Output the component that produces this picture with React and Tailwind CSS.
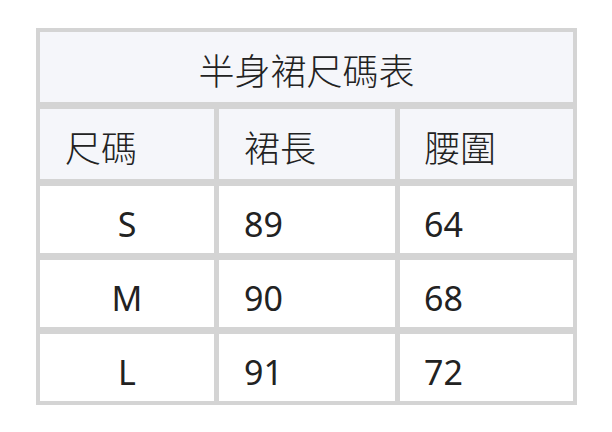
const rows = [
  { size: 'S', length: '89', waist: '64' },
  { size: 'M', length: '90', waist: '68' },
  { size: 'L', length: '91', waist: '72' },
];

export default function App() {
  return (
    <div className="w-[612px] h-[432px] bg-white pt-[28px] pl-[36px] text-[#222] font-['Noto_Sans','Noto_Sans_CJK_TC',sans-serif]">
      <div className="w-[541px] bg-[#d4d4d4] p-[4px] grid grid-cols-[174px_176px_173px] gap-x-[5px] gap-y-[7px] grid-rows-[70px_70px_67px_67px_67px]">
        <div className="col-span-3 bg-[#f5f6fa] flex items-center justify-center pt-[10px] text-[36px] font-light">半身裙尺碼表</div>

        <div className="bg-[#f5f6fa] flex items-center pl-[25px] pt-[10px] text-[36px] font-light">尺碼</div>
        <div className="bg-[#f5f6fa] flex items-center pl-[25px] pt-[10px] text-[36px] font-light">裙長</div>
        <div className="bg-[#f5f6fa] flex items-center pl-[24px] pt-[10px] text-[36px] font-light">腰圍</div>

        {rows.map(r => (
          <div key={r.size} className="contents text-[34px]">
            <div className="bg-white flex items-center justify-center pt-[9px]">{r.size}</div>
            <div className="bg-white flex items-center pl-[25px] pt-[9px]">{r.length}</div>
            <div className="bg-white flex items-center pl-[24px] pt-[9px]">{r.waist}</div>
          </div>
        ))}
      </div>
    </div>
  );
}
